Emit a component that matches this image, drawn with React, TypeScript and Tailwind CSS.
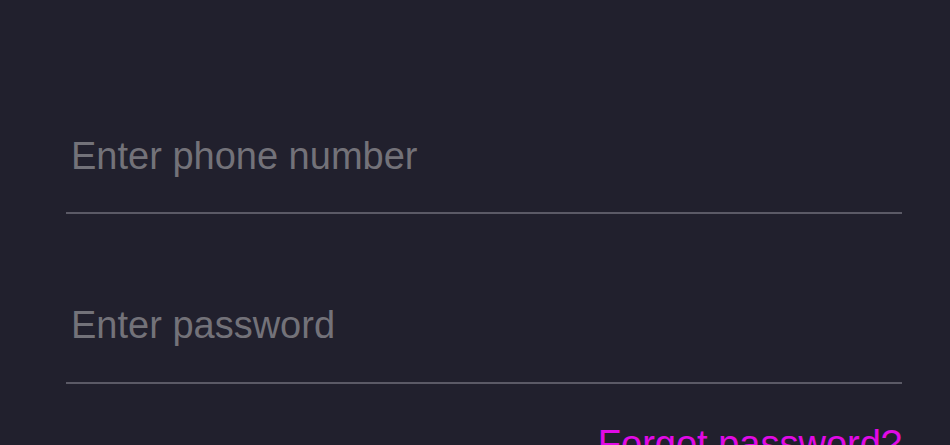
export default function App() {
  return (
    <div className="min-h-[445px] w-full overflow-hidden bg-[#21202d] font-['Liberation_Sans',Arial,sans-serif]">
      <form className="ml-[66px] flex w-[836px] flex-col pt-[102px]" onSubmit={(e) => e.preventDefault()}>
        <input
          type="tel"
          placeholder="Enter phone number"
          className="h-[112px] border-b-2 border-[#5b5a66] bg-transparent px-[5px] pb-[2px] text-[38px] leading-[44px] text-white outline-none placeholder:text-[#737279]"
        />
        <input
          type="password"
          placeholder="Enter password"
          className="mt-[58px] h-[112px] border-b-2 border-[#5b5a66] bg-transparent px-[5px] pb-[4px] text-[38px] leading-[44px] text-white outline-none placeholder:text-[#737279]"
        />
        <div className="mt-[38px] flex justify-end">
          <a href="#" className="text-[38px] leading-[44px] text-[#e10ae6]">
            Forgot password?
          </a>
        </div>
      </form>
    </div>
  );
}
